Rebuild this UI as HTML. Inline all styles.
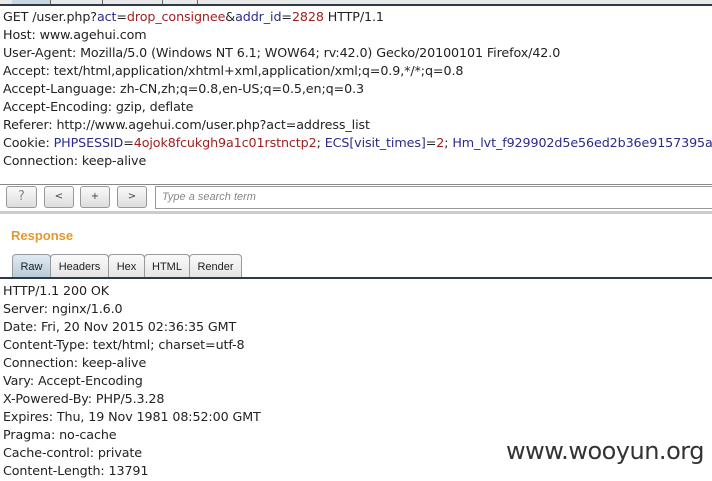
<html><head><style>
body{margin:0;width:712px;height:481px;background:#fff;position:relative;overflow:hidden;font-family:"DejaVu Sans","Liberation Sans",sans-serif;color:#222}
.l{position:absolute;left:3px;font-size:12.7px;white-space:nowrap;letter-spacing:-0.1px}
.b{color:#2a2a8a}.r{color:#a02020}
.btn{position:absolute;top:186px;height:20px;border:1px solid #999;border-radius:3px;background:linear-gradient(#fafafa,#ddd);font-size:10px;text-align:center;line-height:20px;color:#444}
.tab{position:absolute;top:254px;height:23px;border:1px solid #999;border-bottom:none;border-radius:4px 4px 0 0;background:linear-gradient(#fafafa,#e4e4e4);font:11px "Liberation Sans",sans-serif;text-align:center;line-height:24px;color:#222}
</style></head><body>
<div style="position:absolute;left:0;top:0;width:712px;height:4px;background:#e8e8e8"></div>
<div style="position:absolute;left:12px;top:0;width:38px;height:4px;background:#c8d6e2;border-right:1px solid #666"></div>
<div style="position:absolute;left:102px;top:0;width:1px;height:4px;background:#666"></div>
<div style="position:absolute;left:162px;top:0;width:1px;height:4px;background:#666"></div>
<div style="position:absolute;left:197px;top:0;width:1px;height:4px;background:#666"></div>
<div style="position:absolute;left:0;top:4px;width:712px;height:2px;background:#2c3a4a"></div>
<div class="l" style="top:9px">GET /user.php?<span class="b">act</span>=<span class="r">drop_consignee</span>&amp;<span class="b">addr_id</span>=<span class="r">2828</span> HTTP/1.1</div>
<div class="l" style="top:27px">Host: www.agehui.com</div>
<div class="l" style="top:45px">User-Agent: Mozilla/5.0 (Windows NT 6.1; WOW64; rv:42.0) Gecko/20100101 Firefox/42.0</div>
<div class="l" style="top:63px">Accept: text/html,application/xhtml+xml,application/xml;q=0.9,*/*;q=0.8</div>
<div class="l" style="top:81px">Accept-Language: zh-CN,zh;q=0.8,en-US;q=0.5,en;q=0.3</div>
<div class="l" style="top:99px">Accept-Encoding: gzip, deflate</div>
<div class="l" style="top:117px">Referer: http://www.agehui.com/user.php?act=address_list</div>
<div class="l" style="top:135px">Cookie: <span class="b">PHPSESSID</span>=<span class="r">4ojok8fcukgh9a1c01rstnctp2</span>; <span class="b">ECS[visit_times]</span>=<span class="r">2</span>; <span class="b">Hm_lvt_f929902d5e56ed2b36e9157395a27</span></div>
<div class="l" style="top:153px">Connection: keep-alive</div>
<div style="position:absolute;left:0;top:184px;width:712px;height:1px;background:#888"></div>
<div class="btn" style="left:6px;width:29px;font-size:13px;color:#888">?</div>
<div class="btn" style="left:44px;width:28px">&lt;</div>
<div class="btn" style="left:80px;width:28px">+</div>
<div class="btn" style="left:117px;width:28px">&gt;</div>
<div style="position:absolute;left:155px;top:186px;width:560px;height:21px;border:1px solid #999;background:#fff;font:italic 11px 'Liberation Sans',sans-serif;color:#888;line-height:21px;padding-left:6px">Type a search term</div>
<div style="position:absolute;left:0;top:211px;width:712px;height:3px;background:#ccc"></div>
<div style="position:absolute;left:11px;top:228px;font:bold 13px 'Liberation Sans',sans-serif;color:#e09a30">Response</div>
<div class="tab" style="left:12px;width:37px;background:linear-gradient(#e0eaf2,#b8cad8)">Raw</div>
<div class="tab" style="left:50px;width:57px">Headers</div>
<div class="tab" style="left:108px;width:35px">Hex</div>
<div class="tab" style="left:144px;width:44px">HTML</div>
<div class="tab" style="left:189px;width:51px">Render</div>
<div style="position:absolute;left:0;top:277px;width:712px;height:2px;background:#2c3a4a"></div>
<div class="l" style="top:283px">HTTP/1.1 200 OK</div>
<div class="l" style="top:301px">Server: nginx/1.6.0</div>
<div class="l" style="top:319px">Date: Fri, 20 Nov 2015 02:36:35 GMT</div>
<div class="l" style="top:337px">Content-Type: text/html; charset=utf-8</div>
<div class="l" style="top:355px">Connection: keep-alive</div>
<div class="l" style="top:373px">Vary: Accept-Encoding</div>
<div class="l" style="top:391px">X-Powered-By: PHP/5.3.28</div>
<div class="l" style="top:409px">Expires: Thu, 19 Nov 1981 08:52:00 GMT</div>
<div class="l" style="top:427px">Pragma: no-cache</div>
<div class="l" style="top:445px">Cache-control: private</div>
<div class="l" style="top:463px">Content-Length: 13791</div>
<div style="position:absolute;left:506px;top:437px;font:24px 'DejaVu Sans',sans-serif;color:#333;letter-spacing:-0.5px">www.wooyun.org</div>
</body></html>
